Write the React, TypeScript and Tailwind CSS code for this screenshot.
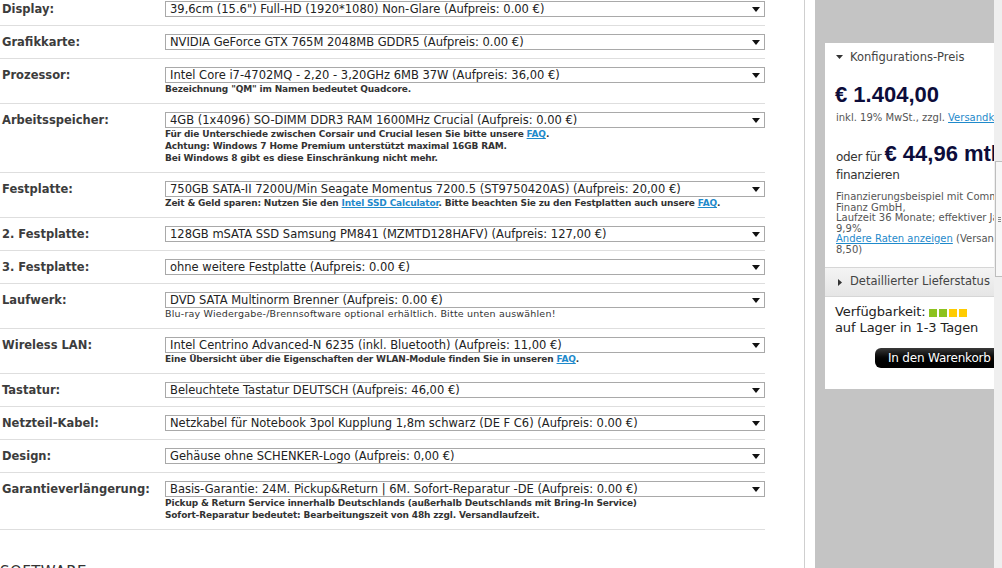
import React from "react";

type Part = string | { link: string };

type ConfigRow = {
  label: string;
  value: string;
  notes?: Part[][];
  plainNote?: boolean;
};

const rows: ConfigRow[] = [
  { label: "Display:", value: "39,6cm (15.6\") Full-HD (1920*1080) Non-Glare (Aufpreis: 0.00 €)" },
  { label: "Grafikkarte:", value: "NVIDIA GeForce GTX 765M 2048MB GDDR5 (Aufpreis: 0.00 €)" },
  {
    label: "Prozessor:",
    value: "Intel Core i7-4702MQ - 2,20 - 3,20GHz 6MB 37W (Aufpreis: 36,00 €)",
    notes: [["Bezeichnung \"QM\" im Namen bedeutet Quadcore."]],
  },
  {
    label: "Arbeitsspeicher:",
    value: "4GB (1x4096) SO-DIMM DDR3 RAM 1600MHz Crucial (Aufpreis: 0.00 €)",
    notes: [
      ["Für die Unterschiede zwischen Corsair und Crucial lesen Sie bitte unsere ", { link: "FAQ" }, "."],
      ["Achtung: Windows 7 Home Premium unterstützt maximal 16GB RAM."],
      ["Bei Windows 8 gibt es diese Einschränkung nicht mehr."],
    ],
  },
  {
    label: "Festplatte:",
    value: "750GB SATA-II 7200U/Min Seagate Momentus 7200.5 (ST9750420AS) (Aufpreis: 20,00 €)",
    notes: [
      [
        "Zeit & Geld sparen: Nutzen Sie den ",
        { link: "Intel SSD Calculator" },
        ". Bitte beachten Sie zu den Festplatten auch unsere ",
        { link: "FAQ" },
        ".",
      ],
    ],
  },
  { label: "2. Festplatte:", value: "128GB mSATA SSD Samsung PM841 (MZMTD128HAFV) (Aufpreis: 127,00 €)" },
  { label: "3. Festplatte:", value: "ohne weitere Festplatte (Aufpreis: 0.00 €)" },
  {
    label: "Laufwerk:",
    value: "DVD SATA Multinorm Brenner (Aufpreis: 0.00 €)",
    notes: [["Blu-ray Wiedergabe-/Brennsoftware optional erhältlich. Bitte unten auswählen!"]],
    plainNote: true,
  },
  {
    label: "Wireless LAN:",
    value: "Intel Centrino Advanced-N 6235 (inkl. Bluetooth) (Aufpreis: 11,00 €)",
    notes: [["Eine Übersicht über die Eigenschaften der WLAN-Module finden Sie in unseren ", { link: "FAQ" }, "."]],
  },
  { label: "Tastatur:", value: "Beleuchtete Tastatur DEUTSCH (Aufpreis: 46,00 €)" },
  { label: "Netzteil-Kabel:", value: "Netzkabel für Notebook 3pol Kupplung 1,8m schwarz (DE F C6) (Aufpreis: 0.00 €)" },
  { label: "Design:", value: "Gehäuse ohne SCHENKER-Logo (Aufpreis: 0,00 €)" },
  {
    label: "Garantieverlängerung:",
    value: "Basis-Garantie: 24M. Pickup&Return | 6M. Sofort-Reparatur -DE (Aufpreis: 0.00 €)",
    notes: [
      ["Pickup & Return Service innerhalb Deutschlands (außerhalb Deutschlands mit Bring-In Service)"],
      ["Sofort-Reparatur bedeutet: Bearbeitungszeit von 48h zzgl. Versandlaufzeit."],
    ],
  },
];

const Caret = () => (
  <svg width="8" height="5" viewBox="0 0 8 5" className="shrink-0">
    <path d="M0 0h8L4 5z" fill="#111" />
  </svg>
);

const Dropdown = ({ value }: { value: string }) => (
  <div className="flex h-[16px] w-[600px] items-center justify-between border border-[#a9a9a9] bg-white pl-[4px] pr-[4px] text-[11.5px] leading-[14px] text-[#222]">
    <span className="whitespace-nowrap">{value}</span>
    <Caret />
  </div>
);

const Row = ({ row, first }: { row: ConfigRow; first: boolean }) => (
  <div className={`flex w-[765px] border-b border-[#dedede] pb-[8px] ${first ? "pt-[1px]" : "pt-[8px]"}`}>
    <div className="w-[165px] shrink-0 pl-[2px] pt-[1px] text-[11.5px] font-bold leading-[14px] text-[#3c3c3c]">
      {row.label}
    </div>
    <div className="flex flex-col">
      <Dropdown value={row.value} />
      {row.notes?.map((line, i) => (
        <div
          key={i}
          className={`whitespace-nowrap leading-[12px] text-[#333] ${
            row.plainNote ? "text-[9.5px] font-normal tracking-[0.2px]" : "text-[9px] font-bold tracking-[-0.15px]"
          }`}
        >
          {line.map((p, j) =>
            typeof p === "string" ? (
              <span key={j}>{p}</span>
            ) : (
              <a key={j} className="text-[#1f8acb] underline">
                {p.link}
              </a>
            )
          )}
        </div>
      ))}
    </div>
  </div>
);

const PriceCard = () => (
  <div className="mt-[43px] ml-[10px] w-[200px] bg-white pb-[21px] text-[#333]">
    {/* Konfigurations-Preis */}
    <div className="flex items-center gap-[6px] pl-[11px] pt-[7px] text-[11.5px] leading-[14px] text-[#444]">
      <svg width="7" height="4" viewBox="0 0 7 4">
        <path d="M0 0h7L3.5 4z" fill="#333" />
      </svg>
      <span className="pl-[1px]">Konfigurations-Preis</span>
    </div>
    <div className="pl-[10px] pt-[18px] font-['Liberation_Sans',Arial,sans-serif] text-[22px] font-bold leading-[26px] text-[#0c0c3a]">
      € 1.404,00
    </div>
    <div className="whitespace-nowrap pl-[11px] pt-[4px] text-[10px] leading-[12px] text-[#555]">
      inkl. 19% MwSt., zzgl. <a className="text-[#1f8acb] underline">Versandkosten</a>
    </div>
    <div className="flex items-baseline whitespace-nowrap pl-[11px] pt-[17px]">
      <span className="text-[12px] tracking-[-0.3px] text-[#333]">oder für</span>
      <span className="pl-[3px] font-['Liberation_Sans',Arial,sans-serif] text-[22px] font-bold leading-[26px] text-[#0c0c3a]">
        € 44,96 mtl.
      </span>
    </div>
    <div className="pl-[11px] text-[12px] leading-[16px] tracking-[-0.3px] text-[#333]">finanzieren</div>
    <div className="whitespace-nowrap pl-[11px] pt-[9px] text-[10px] leading-[10.5px] text-[#555]">
      <div>Finanzierungsbeispiel mit Commerz</div>
      <div>Finanz GmbH,</div>
      <div>Laufzeit 36 Monate; effektiver Jahreszins</div>
      <div>9,9%</div>
      <div>
        <a className="text-[#1f8acb] underline">Andere Raten anzeigen</a> (Versand
      </div>
      <div>8,50)</div>
    </div>

    {/* Lieferstatus */}
    <div className="mt-[12px] flex h-[30px] items-center gap-[8px] border-y border-[#d6d6d6] bg-gradient-to-b from-[#f4f4f4] to-[#e6e6e6] pl-[13px] text-[11.5px] text-[#444]">
      <svg width="4" height="7" viewBox="0 0 4 7">
        <path d="M0 0l4 3.5L0 7z" fill="#333" />
      </svg>
      <span>Detaillierter Lieferstatus</span>
    </div>
    <div className="pl-[10px] pt-[7px] text-[13px] leading-[16px] tracking-[-0.1px] text-[#222]">
      <div className="flex items-center gap-[3px]">
        <span>Verfügbarkeit:</span>
        <span className="flex gap-[2px] pt-[1px]">
          <span className="h-[8px] w-[8px] bg-[#8dc21f]" />
          <span className="h-[8px] w-[8px] bg-[#8dc21f]" />
          <span className="h-[8px] w-[8px] bg-[#ffcc00]" />
          <span className="h-[8px] w-[8px] bg-[#ffcc00]" />
        </span>
      </div>
      <div>auf Lager in 1-3 Tagen</div>
    </div>
    <div className="pl-[50px] pt-[12px]">
      <button className="flex h-[20px] w-[140px] items-center rounded-[6px] bg-gradient-to-b from-[#3a3a3a] via-[#050505] to-black pl-[13px] text-[12px] tracking-[-0.2px] text-white">
        In den Warenkorb
      </button>
    </div>
  </div>
);

export default function App() {
  return (
    <div className="flex h-[568px] w-[1002px] overflow-hidden bg-white font-['DejaVu_Sans',Verdana,sans-serif]">
      {/* configurator */}
      <div className="w-[805px] shrink-0 border-r border-[#cfcfcf]">
        {rows.map((r, i) => (
          <Row key={r.label} row={r} first={i === 0} />
        ))}
        <div className="pt-[31px] text-[15px] tracking-[0.5px] text-[#333]">SOFTWARE</div>
      </div>

      {/* sidebar */}
      <div className="ml-[10px] w-[179px] shrink-0 overflow-hidden bg-[#c4c4c4]">
        <PriceCard />
      </div>
      <div className="relative w-[8px] shrink-0 bg-[#efefef]">
        {/* floating side tab with grip */}
        <div className="absolute left-[1px] top-[161px] flex h-[116px] w-[10px] flex-col items-start justify-center gap-[1px] border border-[#bdbdbd] bg-[#f7f7f7] pl-[2px]">
          <span className="h-[1px] w-[3px] bg-[#888]" />
          <span className="h-[1px] w-[3px] bg-[#888]" />
          <span className="h-[1px] w-[3px] bg-[#888]" />
        </div>
      </div>
    </div>
  );
}
